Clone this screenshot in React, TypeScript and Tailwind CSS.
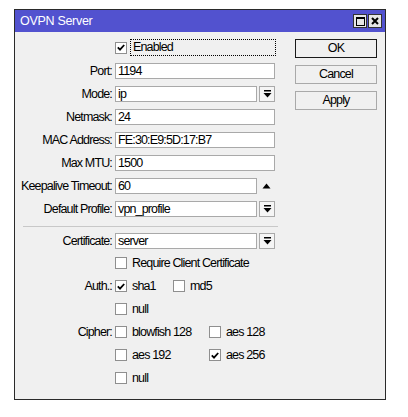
import React from 'react';

const font = { fontFamily: '"Liberation Sans", Arial, sans-serif' };

const Label: React.FC<{ text?: string }> = ({ text }) => (
  <div className="w-[100px] shrink-0 flex justify-end pr-[3px] leading-[16px] whitespace-nowrap">{text}</div>
);

const DropIcon = () => (
  <svg width="9" height="8" viewBox="0 0 9 8">
    <rect x="1" y="0" width="7" height="1.5" fill="#000" />
    <path d="M0.5 3 L8.5 3 L4.5 7.5 Z" fill="#000" />
  </svg>
);

const Input: React.FC<{ value: string; w?: string }> = ({ value, w = 'w-[160px]' }) => (
  <div className={`${w} h-[16px] bg-white border border-[#a9a9a9] pl-[2px] leading-[14px] overflow-hidden whitespace-nowrap`}>
    {value}
  </div>
);

const Field: React.FC<{ label: string; value: string }> = ({ label, value }) => (
  <div className="flex h-[16px] items-center">
    <Label text={label} />
    <Input value={value} />
  </div>
);

const Select: React.FC<{ label: string; value: string }> = ({ label, value }) => (
  <div className="flex h-[16px] items-center">
    <Label text={label} />
    <Input value={value} w="w-[142px]" />
    <div className="ml-[2px] w-[16px] h-[16px] border border-[#a9a9a9] bg-[#f5f5f5] flex items-center justify-center">
      <DropIcon />
    </div>
  </div>
);

const Check: React.FC<{ on?: boolean }> = ({ on }) => (
  <div className="w-[12px] h-[12px] shrink-0 bg-white border border-[#8f8f8f] flex items-center justify-center">
    {on && (
      <svg width="8" height="7" viewBox="0 0 8 7">
        <path d="M0.8 3.4 L3 5.6 L7.2 1" stroke="#000" strokeWidth="1.8" fill="none" />
      </svg>
    )}
  </div>
);

const Opt: React.FC<{ text: string; on?: boolean; w?: string }> = ({ text, on, w = '' }) => (
  <div className={`flex items-center gap-[5px] ${w}`}>
    <Check on={on} />
    <span className="leading-[16px] whitespace-nowrap">{text}</span>
  </div>
);

const Button: React.FC<{ text: string; primary?: boolean }> = ({ text, primary }) => (
  <div
    className={`w-[82px] h-[19px] flex items-center justify-center bg-[#f0f0f0] border ${
      primary ? 'border-[#1a1a1a]' : 'border-[#a9a9a9]'
    }`}
  >
    {text}
  </div>
);

export default function App() {
  return (
    <div
      className="w-[408px] h-[417px] bg-white pt-[9px] pl-[14px] text-[12.5px] tracking-[-0.85px] text-black"
      style={font}
    >
      <div className="w-[372px] h-[391px] border border-[#2a2a2a] bg-[#f0f0f0] flex flex-col">
        {/* title bar */}
        <div className="h-[22px] bg-[#5252cf] flex items-center pl-[5px] pr-[3px] shrink-0">
          <span className="text-white text-[12.5px] tracking-[-0.3px] flex-1">OVPN Server</span>
          <div className="flex gap-[1px]">
            <div className="w-[14px] h-[14px] bg-[#e6e6e6] border border-[#333] flex items-center justify-center">
              <div className="w-[9px] h-[9px] border border-black border-t-2" />
            </div>
            <div className="w-[14px] h-[14px] bg-[#e6e6e6] border border-[#333] flex items-center justify-center">
              <svg width="8" height="8" viewBox="0 0 8 8">
                <path d="M1 1 L7 7 M7 1 L1 7" stroke="#000" strokeWidth="2" />
              </svg>
            </div>
          </div>
        </div>

        <div className="flex flex-1">
          {/* form column */}
          <div className="flex flex-col pt-[7px]">
            <div className="flex h-[17px] items-center">
              <Label />
              <Check on />
              <div className="ml-[3px] w-[146px] h-[17px] border border-dotted border-black pl-[2px] leading-[15px]">
                Enabled
              </div>
            </div>
            <div className="flex flex-col gap-[7px] mt-[7px]">
              <Field label="Port:" value="1194" />
              <Select label="Mode:" value="ip" />
              <Field label="Netmask:" value="24" />
              <Field label="MAC Address:" value="FE:30:E9:5D:17:B7" />
              <Field label="Max MTU:" value="1500" />
              <div className="flex h-[16px] items-center">
                <Label text="Keepalive Timeout:" />
                <Input value="60" w="w-[142px]" />
                <div className="w-[18px] flex justify-center">
                  <svg width="9" height="6" viewBox="0 0 9 6">
                    <path d="M0.5 5.5 L8.5 5.5 L4.5 0.5 Z" fill="#000" />
                  </svg>
                </div>
              </div>
              <Select label="Default Profile:" value="vpn_profile" />
            </div>
            <div className="ml-[8px] w-[255px] h-px bg-[#c8c8c8] mt-[9px]" />
            <div className="mt-[6px]">
              <Select label="Certificate:" value="server" />
            </div>
            <div className="flex flex-col gap-[7px] mt-[6px]">
              <div className="flex h-[16px] items-center">
                <Label />
                <Opt text="Require Client Certificate" />
              </div>
              <div className="flex h-[16px] items-center">
                <Label text="Auth.:" />
                <Opt text="sha1" on w="w-[58px]" />
                <Opt text="md5" />
              </div>
              <div className="flex h-[16px] items-center">
                <Label />
                <Opt text="null" />
              </div>
              <div className="flex h-[16px] items-center">
                <Label text="Cipher:" />
                <Opt text="blowfish 128" w="w-[94px]" />
                <Opt text="aes 128" />
              </div>
              <div className="flex h-[16px] items-center">
                <Label />
                <Opt text="aes 192" w="w-[94px]" />
                <Opt text="aes 256" on />
              </div>
              <div className="flex h-[16px] items-center">
                <Label />
                <Opt text="null" />
              </div>
            </div>
          </div>

          {/* buttons */}
          <div className="flex flex-col gap-[7px] pt-[7px] ml-[17px]">
            <Button text="OK" primary />
            <Button text="Cancel" />
            <Button text="Apply" />
          </div>
        </div>
      </div>
    </div>
  );
}
